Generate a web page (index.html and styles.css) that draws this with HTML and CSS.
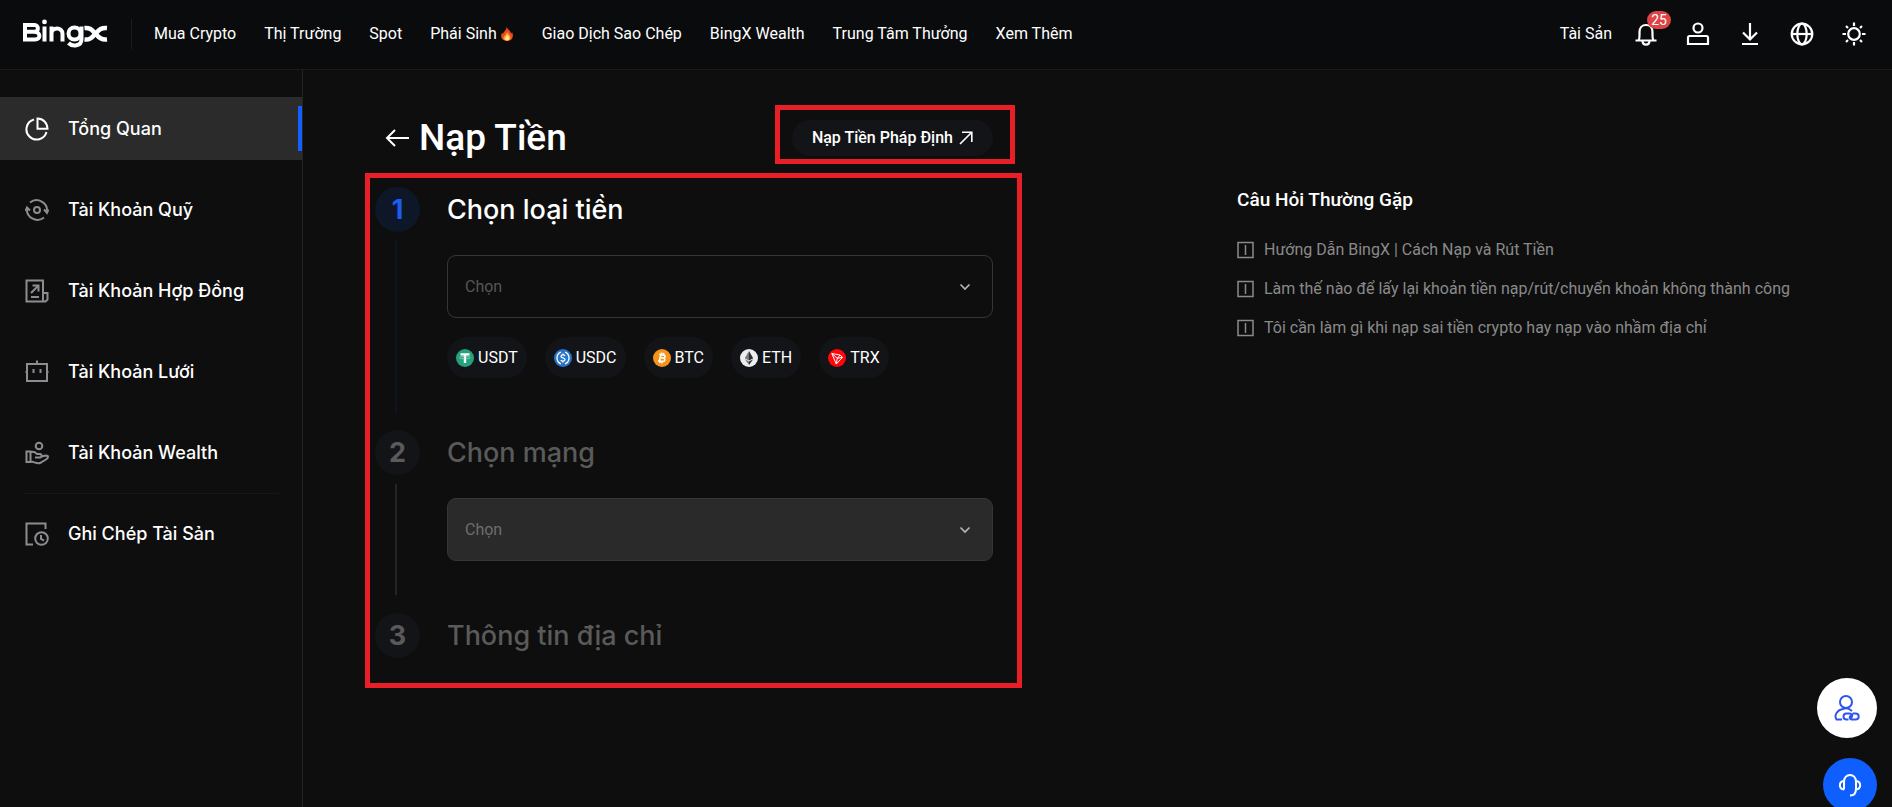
FILE: index.html
```html
<!DOCTYPE html>
<html lang="vi">
<head>
<meta charset="utf-8">
<meta name="viewport" content="width=device-width, initial-scale=1">
<title>Nạp Tiền | BingX</title>
<link rel="stylesheet" href="styles.css">
</head>
<body>
<header class="header">
  <a class="logo" href="#" aria-label="BingX">
    <svg width="86" height="30" viewBox="0 0 86 30" fill="none" stroke="#fff" stroke-width="4">
      <path d="M2 6H11.500C16 6 16 12.800 11.500 12.800H3M11 12.800C18 12.800 18 20.500 12 20.500H2V4"/>
      <circle cx="21.500" cy="2.900" r="2.400" fill="#fff" stroke="none"/>
      <path d="M21.500 7.500V22.500M28.500 22.500V7.500M28.500 14.500C28.500 7.800 39.500 7.500 39.500 15V22.500"/>
      <circle cx="51.500" cy="14.500" r="6"/>
      <path d="M58.500 7.500V20C58.500 27.500 49.500 28 45.500 24"/>
      <path d="M61.500 9C67 8.500 69 11 72.500 14.700C76 18.500 78 21 84 20.500M84 9C78 8.500 76 11 72.500 14.700C69 18.500 67 21 61.500 20.500" stroke-width="4.600"/>
    </svg>
  </a>
  <nav class="nav" aria-label="Chính">
    <a href="#">Mua Crypto</a>
    <a href="#">Thị Trường</a>
    <a href="#">Spot</a>
    <a href="#" class="nav-hot">Phái Sinh
      <svg width="14" height="16" viewBox="0 0 16 18">
        <path d="M7.500 1C9 4 12 5 12.800 8.500L14 7C16 12 14 17 8 17S0 12 2.200 7.500L3.500 9C4 6 7.500 5 7.500 1Z" fill="#e8491d"/>
        <path d="M8 6C9 9 12.500 10 12 14C11 17 5 17.500 4 14C3.500 11 7.500 10 8 6Z" fill="#ff9d2e"/>
        <path d="M8 9.500C9.500 11.500 11.500 13 10.500 15C9 17 6.500 16.500 5.500 15C5 13.500 7.500 12.500 8 9.500Z" fill="#ffe98a"/>
      </svg></a>
    <a href="#">Giao Dịch Sao Chép</a>
    <a href="#">BingX Wealth</a>
    <a href="#">Trung Tâm Thưởng</a>
    <a href="#">Xem Thêm</a>
  </nav>
  <div class="tools">
    <a class="assets" href="#">Tài Sản</a>
    <button class="tool" aria-label="Thông báo">
      <svg class="icon" viewBox="0 0 24 24"><path d="M4.500 18.500C6 16 5.500 14 5.500 10C5.500 6 8 3 12 3S18.500 6 18.500 10C18.500 14 18 16 19.500 18.500ZM1.500 18.500H22.500M8.500 18.500C8.500 24 15.500 24 15.500 18.500"/></svg>
      <span class="badge">25</span>
    </button>
    <button class="tool" aria-label="Hồ sơ">
      <svg class="icon" viewBox="0 0 24 24"><circle cx="12" cy="6" r="4.500"/><path d="M3.500 14H20.500Q22 14 22 16V22H2V16Q2 14 3.500 14Z"/></svg>
    </button>
    <button class="tool" aria-label="Tải xuống">
      <svg class="icon" viewBox="0 0 24 24"><path d="M12 1V17M5 10.500L12 17.500L19 10.500M4 22H20"/></svg>
    </button>
    <button class="tool" aria-label="Ngôn ngữ">
      <svg class="icon" viewBox="0 0 24 24"><circle cx="12" cy="12" r="10.300"/><ellipse cx="12" cy="12" rx="4.700" ry="10.300"/><path d="M2 12H22"/></svg>
    </button>
    <button class="tool" aria-label="Giao diện">
      <svg class="icon" viewBox="0 0 24 24"><circle cx="12" cy="12" r="5.800"/><path d="M12 .5V4M12 20V23.500M.5 12H4M20 12H23.500M4 4L6 6M18 18L20 20M4 20L6 18M18 6L20 4"/></svg>
    </button>
  </div>
</header>
<div class="body">
  <aside class="sidebar">
    <a class="side-item active" href="#">
      <svg class="icon" viewBox="0 0 24 24"><path d="M9 2.500A10.200 10.200 0 1 0 21.500 15M12.500 1.500V11.800H22.500C22.500 6 18 1.500 12.500 1.500Z"/></svg>
      Tổng Quan</a>
    <a class="side-item" href="#">
      <svg class="icon" viewBox="0 0 24 24"><circle cx="12" cy="12" r="3"/><path d="M5 4.500A10.500 10.500 0 0 1 22 14M19 19.500A10.500 10.500 0 0 1 2 10M.5 13L2 9.500L5 12.500M23.500 11.500L22 15L19 11.500"/></svg>
      Tài Khoản Quỹ</a>
    <a class="side-item" href="#">
      <svg class="icon" viewBox="0 0 24 24"><path d="M18 22.500H1.500V1.500H18V22.500H20.500L22.500 20.500V14H18M6 18H14M6 14L13 7M7.500 6.500H13.500V12.500"/></svg>
      Tài Khoản Hợp Đồng</a>
    <a class="side-item" href="#">
      <svg class="icon" viewBox="0 0 24 24"><path d="M2 4H22V21H2ZM12 .5V4M.5 12H2M22 12H23.500M8.500 9V13M15.500 9V13"/></svg>
      Tài Khoản Lưới</a>
    <a class="side-item" href="#">
      <svg class="icon" viewBox="0 0 24 24"><circle cx="14" cy="5" r="3.300"/><path d="M1.500 10.500H5.500V21H1.500ZM5.500 11.500C9 9.500 10.500 11.500 12 13H15C17 13 17 16.500 15 16.500H10M16.500 15.500L20.500 14.500C24 14.500 23.500 17 21 18.500L15 22C11 23 9 20.500 5.500 20.500"/></svg>
      Tài Khoản Wealth</a>
    <hr class="side-rule">
    <a class="side-item" href="#">
      <svg class="icon" viewBox="0 0 24 24"><path d="M8 22.500H1.500V1.500H20.500V7"/><circle cx="16.500" cy="16.500" r="6.300"/><path d="M16 13V17L19 18.500"/></svg>
      Ghi Chép Tài Sản</a>
  </aside>
  <main class="main">
    <section class="deposit">
      <div class="title-row">
        <a class="back" href="#" aria-label="Quay lại">
          <svg width="24" height="18" viewBox="0 0 24 18" fill="none" stroke="#fff" stroke-width="2"><path d="M24 9H2M10 1L2 9L10 17"/></svg>
        </a>
        <h1>Nạp Tiền</h1>
        <div class="marked marked-button">
          <button class="fiat">Nạp Tiền Pháp Định
            <svg width="14" height="14" viewBox="0 0 14 14" fill="none" stroke="#fff" stroke-width="1.600"><path d="M1 13L12.500 1.500M3 1.200H12.800V11"/></svg>
          </button>
        </div>
      </div>
      <ol class="steps marked marked-steps">
        <li class="step current">
          <div class="rail"><span class="num">1</span><span class="line"></span></div>
          <div class="step-body">
            <h2><label for="coin">Chọn loại tiền</label></h2>
            <div class="field">
              <select id="coin"><option>Chọn</option></select>
              <svg class="chevron" viewBox="0 0 12 8"><path d="M1.500 1.500L6 6L10.500 1.500"/></svg>
            </div>
            <div class="chips">
              <button class="chip">
                <svg class="coin" viewBox="0 0 18 18"><circle cx="9" cy="9" r="9" fill="#26a17b"/><path d="M4.500 4.200H13.500V6.400H10.200V14H7.800V6.400H4.500Z" fill="#fff"/><ellipse cx="9" cy="8.600" rx="5.300" ry="1.200" fill="none" stroke="#b9e2d5" stroke-width=".6"/></svg>USDT</button>
              <button class="chip">
                <svg class="coin" viewBox="0 0 18 18" fill="none" stroke="#fff" stroke-width="1.300"><circle cx="9" cy="9" r="9" fill="#2775ca" stroke="none"/><path d="M7 3.200A6.200 6.200 0 0 0 7 14.800M11 3.200A6.200 6.200 0 0 1 11 14.800M11 7C10.500 5.500 7 5.500 7 7.400C7 9.300 11 8.500 11 10.600C11 12.500 7.300 12.500 7 11M9 4.500V6M9 12V13.500"/></svg>USDC</button>
              <button class="chip">
                <svg class="coin" viewBox="0 0 18 18" fill="none" stroke="#fff" stroke-width="1.600"><circle cx="9" cy="9" r="9" fill="#f7931a" stroke="none"/><path d="M6.300 5.300L10.500 6C13 6.500 12.300 9.300 10 9L7 8.500M10 9C12.800 9.500 12 12.700 9.500 12.500L5 11.700M7.800 5.300L6.500 12M8.700 3.500L8.400 5.500M10.800 4L10.400 6M7 12L6.700 14M9 12.500L8.700 14.500"/></svg>BTC</button>
              <button class="chip">
                <svg class="coin" viewBox="0 0 18 18"><circle cx="9" cy="9" r="9" fill="#eceff0"/><path d="M9 2L4.800 9.200L9 11.600Z" fill="#77797b"/><path d="M9 2L13.200 9.200L9 11.600Z" fill="#2f3030"/><path d="M4.800 10.200L9 16V12.600Z" fill="#77797b"/><path d="M13.200 10.200L9 16V12.600Z" fill="#2f3030"/></svg>ETH</button>
              <button class="chip">
                <svg class="coin" viewBox="0 0 18 18" fill="none" stroke="#fff" stroke-width="1"><circle cx="9" cy="9" r="9" fill="#ff060a" stroke="none"/><path d="M3.800 4.500L12 6L14.500 8.300L8.300 15ZM3.800 4.500L9.300 9.300L8.300 15M9.300 9.300L12 6M9.300 9.300L14.500 8.300"/></svg>TRX</button>
            </div>
          </div>
        </li>
        <li class="step">
          <div class="rail"><span class="num">2</span><span class="line"></span></div>
          <div class="step-body">
            <h2><label for="network">Chọn mạng</label></h2>
            <div class="field">
              <select id="network" disabled><option>Chọn</option></select>
              <svg class="chevron" viewBox="0 0 12 8"><path d="M1.500 1.500L6 6L10.500 1.500"/></svg>
            </div>
          </div>
        </li>
        <li class="step">
          <div class="rail"><span class="num">3</span></div>
          <div class="step-body"><h2>Thông tin địa chỉ</h2></div>
        </li>
      </ol>
    </section>
    <section class="faq">
      <h3>Câu Hỏi Thường Gặp</h3>
      <ul>
        <li><a href="#"><svg class="doc" viewBox="0 0 17 18"><path d="M1 1.500H16V16.500H1ZM8.500 4V14"/></svg>Hướng Dẫn BingX | Cách Nạp và Rút Tiền</a></li>
        <li><a href="#"><svg class="doc" viewBox="0 0 17 18"><path d="M1 1.500H16V16.500H1ZM8.500 4V14"/></svg>Làm thế nào để lấy lại khoản tiền nạp/rút/chuyển khoản không thành công</a></li>
        <li><a href="#"><svg class="doc" viewBox="0 0 17 18"><path d="M1 1.500H16V16.500H1ZM8.500 4V14"/></svg>Tôi cần làm gì khi nạp sai tiền crypto hay nạp vào nhầm địa chỉ</a></li>
      </ul>
    </section>
  </main>
</div>
<div class="floating">
  <button class="float-invite" aria-label="Mời bạn bè">
    <svg width="26" height="26" viewBox="0 0 26 26" fill="none" stroke="#2f54eb" stroke-width="2"><circle cx="12" cy="7" r="6"/><path d="M8 24.500H2.500C-.5 20 4 14.500 9 14C12 12.500 15 13.500 18 16M14.500 24.500H12.500C8.500 24.500 8.500 18.500 12.500 18.500H15C19 18.500 19 22 16.500 22.500M18.500 18.500H21.500C25.800 18.500 25.800 24.500 21.500 24.500H19C15 24.500 15 21 17.500 20.500"/></svg>
  </button>
  <button class="float-support" aria-label="Hỗ trợ">
    <svg width="24" height="24" viewBox="0 0 24 24" fill="none" stroke="#fff" stroke-width="2"><path d="M6 16.500V9C6 -.5 18 -.5 18 9V16C18 20 16 22.500 12 22.500M6 8C.5 8.500 .5 16 6 16.500M18 8C23.500 8.500 23.500 16 18 16.500"/></svg>
  </button>
</div>
</body>
</html>
```
FILE: styles.css
```css
* { box-sizing: border-box; }

body {
  margin: 0;
  min-height: 100vh;
  display: flex;
  flex-direction: column;
  overflow: hidden;
  background: #0e0e0e;
  color: #fff;
  font-family: Roboto, "Noto Sans", sans-serif;
  font-size: 16px;
  line-height: 24px;
}

a { color: inherit; text-decoration: none; }
button, select { font: inherit; color: inherit; border: 0; background: none; padding: 0; cursor: pointer; }
h1, h2, h3, ol, ul { margin: 0; padding: 0; }
ol, ul { list-style: none; }
svg { display: block; flex: none; }

.icon { width: 24px; height: 24px; fill: none; stroke: currentColor; stroke-width: 2; }

/* Header */
.header {
  display: flex;
  align-items: center;
  height: 70px;
  padding: 0 26px 2px 23px;
  background: #0a0b0d;
  border-bottom: 1px solid #1b1b1b;
}
.logo { padding-right: 22px; border-right: 1px solid #1b1c1f; }
.nav { display: flex; gap: 28px; margin-left: 22px; white-space: nowrap; }
.nav-hot { display: flex; align-items: center; gap: 3px; }
.tools { display: flex; align-items: center; gap: 28px; margin-left: auto; }
.assets { margin-right: -6px; white-space: nowrap; }
.tool { position: relative; }
.tool .icon { stroke-width: 2.2; }
.badge {
  position: absolute;
  top: -11px;
  left: 13px;
  width: 24px;
  height: 18px;
  border-radius: 9px;
  background: #dc4446;
  font-size: 14px;
  line-height: 18px;
  text-align: center;
}

/* Sidebar */
.body { display: flex; flex: 1; }
.sidebar {
  flex: 0 0 303px;
  display: flex;
  flex-direction: column;
  gap: 18px;
  padding-top: 27px;
  border-right: 1px solid #242424;
  font-family: Inter, sans-serif;
  font-size: 18px;
  font-weight: 500;
}
.side-item { display: flex; align-items: center; gap: 19px; height: 63px; padding-left: 25px; }
.side-item .icon { color: #8c8d90; }
.side-item.active { background: #2b2b2b; border-right: 4px solid #1360ff; border-image: linear-gradient(#2b2b2b 9px, #1360ff 9px, #1360ff 54px, #2b2b2b 54px) 0 4 0 0; }
.side-item.active .icon { color: #fff; }
.side-rule { width: 256px; height: 1px; margin: -9px auto -10px 23px; border: 0; background: #171717; }

/* Main */
.main {
  flex: 1;
  display: grid;
  grid-template-columns: minmax(0, 618px) minmax(0, 1fr);
  gap: 244px;
  align-items: start;
  padding: 44px 24px 0 72px;
}
.title-row { display: flex; align-items: center; height: 48px; padding-left: 10px; }
h1 { margin-left: 10px; font-size: 37px; font-weight: 500; line-height: 48px; }
.marked { position: relative; }
.marked::after { content: ""; position: absolute; border: 5px solid #e81f26; pointer-events: none; }
.marked-button { margin-left: auto; }
.marked-button::after { inset: -15px -22px -8px -17px; }
.marked-steps::after { inset: -14px -29px -30px -10px; }
.fiat {
  display: flex;
  align-items: center;
  gap: 6px;
  height: 36px;
  padding: 0 20px;
  border-radius: 18px;
  background: #131417;
  font-weight: 500;
  white-space: nowrap;
}

/* Steps */
.steps { margin-top: 25px; }
.step { display: flex; gap: 27px; color: #5a5a5a; }
.rail { display: flex; flex-direction: column; gap: 9px; flex: 0 0 45px; padding-bottom: 18px; }
.step:last-child .rail { padding-bottom: 0; }
.num {
  height: 45px;
  border-radius: 50%;
  background: #131418;
  font-family: Inter, sans-serif;
  font-size: 27px;
  font-weight: 700;
  line-height: 45px;
  text-align: center;
}
.line { flex: 1; width: 2px; margin-left: 20px; background: #252526; }
.step-body { flex: 1; min-width: 0; padding-bottom: 52px; }
.step:last-child .step-body { padding-bottom: 0; }
h2 { font-family: Inter, sans-serif; font-size: 27px; font-weight: 500; line-height: 45px; }
.current h2 { color: #fff; }
.current .num { background: #0d1728; color: #1a5df0; }
.current .line { background: #0d1523; }
.field { position: relative; margin-top: 23px; }
select {
  display: block;
  width: 100%;
  height: 63px;
  padding: 0 17px;
  appearance: none;
  border: 1px solid #363636;
  border-radius: 9px;
  color: #565656;
}
select:disabled { background: #2a2a2a; color: #6e6e6e; opacity: 1; cursor: default; }
.chevron { position: absolute; right: 22px; top: 28px; width: 12px; height: 8px; fill: none; stroke: #b4b4b4; stroke-width: 1.7; pointer-events: none; }
.chips { display: flex; flex-wrap: wrap; gap: 18px; margin-top: 19px; color: #fff; }
.chip {
  display: flex;
  align-items: center;
  gap: 4px;
  height: 41px;
  padding: 0 9px;
  border-radius: 21px;
  background: #131417;
}
.coin { width: 18px; height: 18px; }

/* FAQ */
.faq { padding-top: 74px; }
h3 { font-size: 19px; font-weight: 500; line-height: 24px; }
.faq ul { display: grid; gap: 15px; margin-top: 26px; color: #8a8a8a; }
.faq a { display: flex; align-items: center; gap: 10px; }
.doc { width: 17px; height: 18px; fill: none; stroke: currentColor; stroke-width: 1.5; }

/* Floating actions */
.floating { position: fixed; right: 15px; bottom: -5px; display: flex; flex-direction: column; align-items: flex-end; gap: 20px; }
.float-invite, .float-support { display: grid; place-items: center; border-radius: 50%; }
.float-invite { width: 60px; height: 60px; background: #fff; }
.float-support { width: 54px; height: 54px; background: #0f5fff; }
```
